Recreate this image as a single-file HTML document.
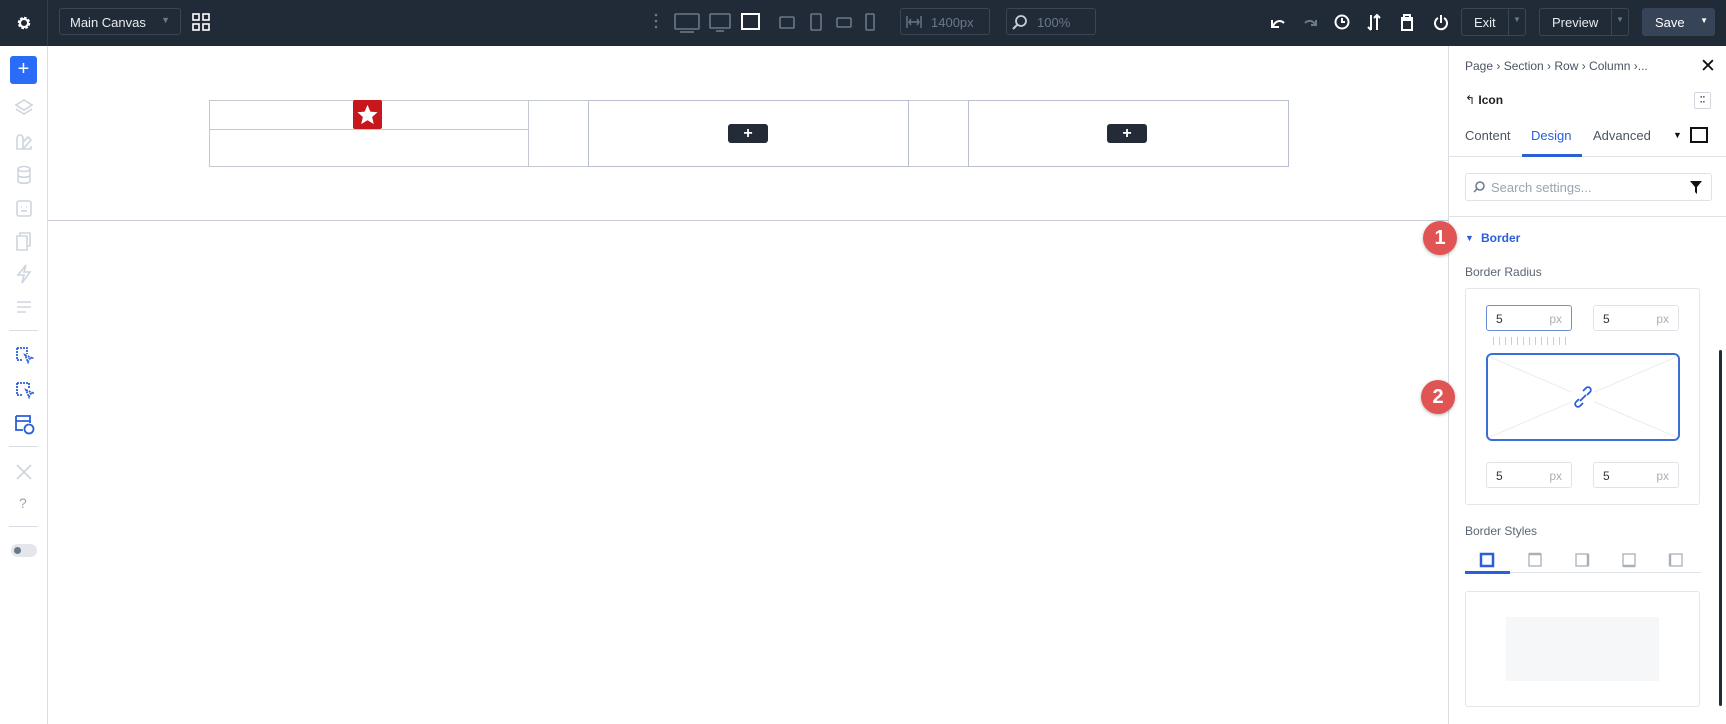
<!DOCTYPE html>
<html><head><meta charset="utf-8"><style>
*{box-sizing:border-box;margin:0;padding:0}
body{width:1726px;height:724px;overflow:hidden;background:#fff;font-family:"Liberation Sans",sans-serif;position:relative;color:#333}
.a{position:absolute}
.top{left:0;top:0;width:1726px;height:46px;background:#212a37}
.tb{border:1px solid #3a4556;border-radius:3px;color:#e8ebef;font-size:13px}
.dim{color:#6b778a}
.ic{stroke:#cfd5de;fill:none;stroke-width:1.6}
.side svg{position:absolute;left:14px}
.lbl{font-size:12px;color:#5c6573}
.inp{border:1px solid #dfe3e8;border-radius:3px;width:86px;height:26px;font-size:12px;color:#333;padding:6px 9px}
.inp span{float:right;color:#aab0b8}
.badge{width:34px;height:34px;border-radius:50%;background:#e05454;color:#fff;font-weight:bold;font-size:20px;text-align:center;line-height:34px;box-shadow:0 1px 3px rgba(0,0,0,.3)}
.pl{background:#232b37;border-radius:3px;color:#fff;font-size:16px;font-weight:bold;text-align:center;line-height:19px}
</style></head><body>
<div class="a top"></div>
<!-- gear -->
<svg class="a" style="left:14px;top:13px" width="20" height="20" viewBox="0 0 20 20"><circle cx="10" cy="10" r="5" fill="none" stroke="#fff" stroke-width="2.5" stroke-dasharray="2.6 1.3"/><circle cx="10" cy="10" r="2" fill="#212a37"/><circle cx="10" cy="10" r="4" fill="none" stroke="#fff" stroke-width="2"/></svg>
<div class="a" style="left:47px;top:0;width:1px;height:46px;background:#333d4c"></div>
<div class="a tb" style="left:59px;top:8px;width:122px;height:27px;padding:6px 10px">Main Canvas<span style="position:absolute;right:10px;top:6px;font-size:9px;color:#6b778a">▼</span></div>
<svg class="a" style="left:192px;top:13px" width="18" height="18"><rect x="1" y="1" width="6" height="6" fill="none" stroke="#fff" stroke-width="1.6"/><rect x="11" y="1" width="6" height="6" fill="none" stroke="#fff" stroke-width="1.6"/><rect x="1" y="11" width="6" height="6" fill="none" stroke="#fff" stroke-width="1.6"/><rect x="11" y="11" width="6" height="6" fill="none" stroke="#fff" stroke-width="1.6"/></svg>
<!-- devices -->
<svg class="a" style="left:652px;top:11px" width="225" height="24">
<g fill="#6b778a"><circle cx="4" cy="4" r="1.3"/><circle cx="4" cy="10" r="1.3"/><circle cx="4" cy="16" r="1.3"/></g>
<g fill="none" stroke="#6b778a" stroke-width="1.6"><rect x="23" y="3" width="24" height="15" rx="1"/><path d="M28 21h14"/><rect x="58" y="3" width="20" height="14" rx="1"/><path d="M64 20h8"/>
<rect x="128" y="6" width="14" height="11" rx="1"/><rect x="159" y="3" width="10" height="16" rx="1"/><rect x="185" y="7" width="14" height="9" rx="1"/><rect x="214" y="3" width="8" height="16" rx="1"/></g>
<rect x="90" y="3" width="17" height="15" fill="none" stroke="#fff" stroke-width="2"/></svg>
<div class="a tb dim" style="left:900px;top:8px;width:90px;height:27px;padding:6px 0 0 30px">1400px</div>
<svg class="a" style="left:906px;top:16px" width="16" height="12"><path d="M1 0v12M15 0v12M3 6h10M5 3l-2 3 2 3M11 3l2 3-2 3" stroke="#6b778a" stroke-width="1.4" fill="none"/></svg>
<div class="a tb dim" style="left:1006px;top:8px;width:90px;height:27px;padding:6px 0 0 30px">100%</div>
<svg class="a" style="left:1012px;top:14px" width="16" height="16"><circle cx="9" cy="7" r="5" stroke="#c5ccd6" stroke-width="1.8" fill="none"/><path d="M5 11l-4 4" stroke="#c5ccd6" stroke-width="2"/></svg>
<!-- right icons -->
<svg class="a" style="left:1268px;top:11px" width="185" height="24" fill="none" stroke-width="2">
<path d="M4 9v7h7M5 15c3-6 8-6 11-3" stroke="#fff"/>
<path d="M48 9v5h-5M47 13c-3-4-7-4-10-1" stroke="#6b778a"/>
<circle cx="74" cy="11" r="6.5" stroke="#fff"/><path d="M74 7v4h3" stroke="#fff"/>
<path d="M103 4v15M100 16l3 3M109 19V4M106 7l3-3 3 3" stroke="#fff"/>
<path d="M133 7h12M136 7V4h6v3M134 9h10v10h-10z" stroke="#fff"/>
<path d="M170 7a6 6 0 1 0 6 0M173 4v8" stroke="#fff"/></svg>
<div class="a tb" style="left:1461px;top:8px;width:65px;height:28px;padding:6px 0 0 12px">Exit</div>
<div class="a" style="left:1508px;top:8px;width:1px;height:28px;background:#3a4556"></div><div class="a dim" style="left:1513px;top:15px;font-size:8px">▼</div>
<div class="a tb" style="left:1539px;top:8px;width:90px;height:28px;padding:6px 0 0 12px">Preview</div>
<div class="a" style="left:1611px;top:8px;width:1px;height:28px;background:#3a4556"></div><div class="a dim" style="left:1616px;top:15px;font-size:8px">▼</div>
<div class="a" style="left:1642px;top:8px;width:73px;height:28px;background:#374357;border-radius:3px;color:#fff;font-size:13px;padding:7px 0 0 13px">Save<span style="position:absolute;right:7px;top:8px;font-size:8px">▼</span></div>

<!-- sidebar -->
<div class="a side" style="left:0;top:46px;width:48px;height:678px;border-right:1px solid #d9dde3">
<div class="a" style="left:10px;top:10px;width:27px;height:28px;background:#2b6cf6;border-radius:3px;color:#fff;text-align:center;font-size:20px;line-height:27px">+</div>
<svg style="top:52px" width="20" height="20" class="ic"><path d="M10 2l8 5-8 5-8-5z M2 11l8 5 8-5" class="ic"/></svg>
<svg style="top:86px" width="20" height="20"><path d="M3 17V6a3 3 0 0 1 6 0v11zM9 10l5-5 3 3-8 9M9 17h8v-3" class="ic"/></svg>
<svg style="top:119px" width="20" height="20"><ellipse cx="10" cy="4" rx="6" ry="2.5" class="ic"/><path d="M4 4v12c0 3 12 3 12 0V4M4 10c0 3 12 3 12 0" class="ic"/></svg>
<svg style="top:152px" width="20" height="20"><rect x="3" y="3" width="14" height="15" rx="2" class="ic"/><path d="M7 9h1M12 9h1M7 13h6" class="ic"/></svg>
<svg style="top:185px" width="20" height="20"><path d="M6 5V2h10v13h-3M3 5h10v14H3z" class="ic"/></svg>
<svg style="top:218px" width="20" height="20"><path d="M12 1L4 11h6l-2 8 8-11h-6z" class="ic"/></svg>
<svg style="top:251px" width="20" height="20"><path d="M3 5h14M3 10h14M3 15h9" class="ic"/></svg>
<div class="a" style="left:9px;top:284px;width:29px;height:1px;background:#d9dde3"></div>
<svg style="top:299px" width="20" height="20"><path d="M3 3h10v6M3 3v12h6M11 10l7 3-3 1-1 3z" fill="none" stroke="#2b5fd9" stroke-width="1.8" stroke-dasharray="2 1"/></svg>
<svg style="top:334px" width="20" height="20"><path d="M3 3h12v6M3 3v12h6M12 10l7 3-3 1-1 3z" fill="none" stroke="#2b5fd9" stroke-width="1.8" stroke-dasharray="2 1"/></svg>
<svg style="top:368px" width="22" height="22"><path d="M2 2h14v7M2 2v14h7M2 7h14" fill="none" stroke="#2b5fd9" stroke-width="1.8"/><circle cx="15" cy="15" r="4.5" fill="none" stroke="#2b5fd9" stroke-width="1.8"/></svg>
<div class="a" style="left:9px;top:400px;width:29px;height:1px;background:#d9dde3"></div>
<svg style="top:416px" width="20" height="20"><path d="M3 3l14 14M17 3L3 17" class="ic"/></svg>
<div class="a" style="left:19px;top:449px;color:#9aa3b0;font-size:14px">?</div>
<div class="a" style="left:9px;top:480px;width:29px;height:1px;background:#d9dde3"></div>
<div class="a" style="left:11px;top:498px;width:26px;height:13px;border-radius:7px;background:#e3e6ea"><div class="a" style="left:3px;top:3px;width:7px;height:7px;border-radius:50%;background:#6b778a"></div></div>
</div>

<!-- canvas -->
<div class="a" style="left:48px;top:220px;width:1400px;height:1px;background:#c9ced6"></div>
<div class="a" style="left:209px;top:100px;width:1080px;height:67px;border:1px solid #c3c8d1"></div>
<div class="a" style="left:209px;top:100px;width:320px;height:67px;border:1px solid #c3c8d1"></div>
<div class="a" style="left:209px;top:129px;width:320px;height:1px;background:#c3c8d1"></div>
<div class="a" style="left:588px;top:100px;width:321px;height:67px;border:1px solid #b9bfd0"></div>
<div class="a" style="left:968px;top:100px;width:321px;height:67px;border:1px solid #b9bfd0"></div>
<div class="a" style="left:353px;top:100px;width:29px;height:29px;background:#c8161d;border-radius:2px"></div>
<svg class="a" style="left:356px;top:103px" width="23" height="23" viewBox="0 0 24 24"><path d="M12 2l3 7 7.5.6-5.7 5 1.8 7.4L12 18l-6.6 4 1.8-7.4-5.7-5L9 9z" fill="#fff"/></svg>
<div class="a pl" style="left:728px;top:124px;width:40px;height:19px">+</div>
<div class="a pl" style="left:1107px;top:124px;width:40px;height:19px">+</div>

<!-- panel -->
<div class="a" style="left:1448px;top:46px;width:1px;height:678px;background:#d9dde3"></div>
<div class="a" style="left:1465px;top:59px;font-size:12px;color:#4b5563">Page › Section › Row › Column ›...</div>
<div class="a" style="left:1700px;top:55px;font-size:19px;color:#111">✕</div>
<div class="a" style="left:1465px;top:93px;font-size:12px;color:#222">↰ <b style="font-weight:600">Icon</b></div>
<div class="a" style="left:1694px;top:92px;width:17px;height:17px;border:1px solid #d3d7dd;border-radius:2px;font-size:9px;text-align:center;line-height:14px">⠭</div>
<div class="a" style="left:1465px;top:128px;font-size:13px;color:#4b5563">Content</div>
<div class="a" style="left:1531px;top:128px;font-size:13px;color:#2b5fd9">Design</div>
<div class="a" style="left:1593px;top:128px;font-size:13px;color:#4b5563">Advanced</div>
<div class="a" style="left:1673px;top:130px;font-size:9px;color:#111">▼</div>
<div class="a" style="left:1690px;top:127px;width:18px;height:16px;border:2px solid #111"></div>
<div class="a" style="left:1448px;top:156px;width:278px;height:1px;background:#dfe3e8"></div>
<div class="a" style="left:1522px;top:154px;width:60px;height:3px;background:#2b5fd9"></div>
<div class="a" style="left:1465px;top:173px;width:247px;height:28px;border:1px solid #dfe3e8;border-radius:3px;font-size:13px;color:#9aa3b0;padding:6px 0 0 25px">Search settings...</div>
<svg class="a" style="left:1473px;top:181px" width="12" height="12"><circle cx="7" cy="5" r="4" stroke="#6b778a" stroke-width="1.5" fill="none"/><path d="M4 8L1 11" stroke="#6b778a" stroke-width="1.5"/></svg>
<svg class="a" style="left:1690px;top:181px" width="12" height="13"><path d="M0 0h12L7 6v7L5 11V6z" fill="#111"/></svg>
<div class="a" style="left:1448px;top:216px;width:278px;height:1px;background:#dfe3e8"></div>
<div class="a badge" style="left:1423px;top:221px">1</div>
<div class="a" style="left:1465px;top:233px;font-size:9px;color:#2b5fd9">▼</div>
<div class="a" style="left:1481px;top:231px;font-size:12px;font-weight:bold;color:#2b5fd9">Border</div>
<div class="a lbl" style="left:1465px;top:265px">Border Radius</div>
<div class="a" style="left:1465px;top:288px;width:235px;height:217px;border:1px solid #e3e6ea;border-radius:3px"></div>
<div class="a inp" style="left:1486px;top:305px;border-color:#6d8fd8">5<span>px</span></div>
<div class="a inp" style="left:1593px;top:305px">5<span>px</span></div>
<div class="a" style="left:1493px;top:337px;width:75px;height:8px;background:repeating-linear-gradient(90deg,#c9ced6 0 1px,transparent 1px 6px)"></div>
<svg class="a" style="left:1486px;top:353px" width="194" height="88"><line x1="4" y1="4" x2="190" y2="84" stroke="#ececec"/><line x1="190" y1="4" x2="4" y2="84" stroke="#ececec"/><rect x="1" y="1" width="192" height="86" rx="5" fill="none" stroke="#3b6fd4" stroke-width="2"/><rect x="86" y="34" width="22" height="20" fill="#fff"/><path d="M93 46l-3 3a2.5 2.5 0 0 0 4 4l3-3M101 42l3-3a2.5 2.5 0 0 0-4-4l-3 3M94 48l6-6" stroke="#2b5fd9" stroke-width="1.8" fill="none"/></svg>
<div class="a badge" style="left:1421px;top:380px">2</div>
<div class="a inp" style="left:1486px;top:462px">5<span>px</span></div>
<div class="a inp" style="left:1593px;top:462px">5<span>px</span></div>
<div class="a lbl" style="left:1465px;top:524px">Border Styles</div>
<svg class="a" style="left:1465px;top:551px" width="236" height="24"><rect x="16" y="3" width="12" height="12" fill="none" stroke="#2b5fd9" stroke-width="2.5"/><g fill="none" stroke="#a9b0ba" stroke-width="1.3"><rect x="64" y="3" width="12" height="12"/><path d="M64 3h12" stroke-width="2.5"/><rect x="111" y="3" width="12" height="12"/><path d="M123 3v12" stroke-width="2.5"/><rect x="158" y="3" width="12" height="12"/><path d="M158 15h12" stroke-width="2.5"/><rect x="205" y="3" width="12" height="12"/><path d="M205 3v12" stroke-width="2.5"/></g><rect x="0" y="21" width="236" height="1" fill="#dfe3e8"/><rect x="0" y="20" width="45" height="3" fill="#2b5fd9"/></svg>
<div class="a" style="left:1465px;top:591px;width:235px;height:116px;border:1px solid #e3e6ea;border-radius:3px"></div>
<div class="a" style="left:1506px;top:617px;width:153px;height:64px;background:#f6f7f8"></div>
<div class="a" style="left:1719px;top:350px;width:3px;height:356px;background:#232b37;border-radius:2px"></div>
</body></html>
